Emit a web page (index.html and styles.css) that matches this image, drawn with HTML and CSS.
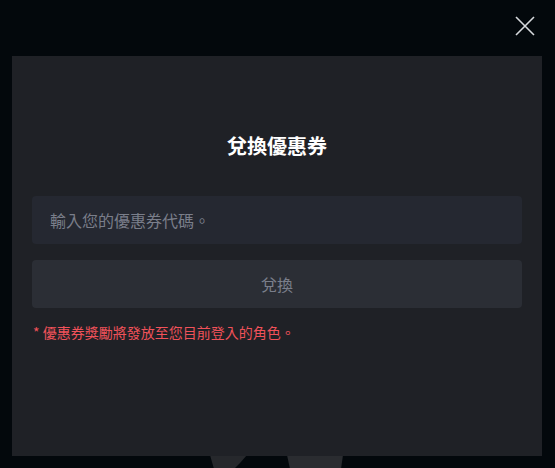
FILE: index.html
```html
<!DOCTYPE html>
<html lang="zh-Hant">
<head>
<meta charset="utf-8">
<title>兌換優惠券</title>
<link rel="stylesheet" href="styles.css">
</head>
<body>
<div class="backdrop">
  <svg class="bg-figure" width="140" height="14" viewBox="0 0 140 14">
    <path d="M0 0 H37 L30 8 L24 14 H4 Z" fill="#26282c"/>
    <path d="M77 0 H133 L131 14 H80 Z" fill="#2a2c30"/>
  </svg>
  <button class="close" aria-label="關閉">
    <svg width="20" height="20" viewBox="0 0 20 20"><path d="M1 1 L19 19 M19 1 L1 19" stroke="#d6d9dd" stroke-width="1.6" fill="none"/></svg>
  </button>
  <div class="modal">
    <h2 class="title">兌換優惠券</h2>
    <input class="code-input" type="text" placeholder="輸入您的優惠券代碼。">
    <button class="redeem">兌換</button>
    <p class="note">* 優惠券獎勵將發放至您目前登入的角色。</p>
  </div>
</div>
</body>
</html>
```

FILE: styles.css
```css
html, body {
  margin: 0;
  padding: 0;
  background: #03080c;
}
body {
  font-family: "Noto Sans CJK TC", "Noto Sans", sans-serif;
  width: 555px;
  height: 468px;
  overflow: hidden;
}
.backdrop {
  position: relative;
  width: 555px;
  height: 468px;
  padding-top: 56px;
  box-sizing: border-box;
}
.bg-figure {
  position: absolute;
  left: 210px;
  top: 455px;
}
.close {
  position: absolute;
  left: 515px;
  top: 16px;
  width: 20px;
  height: 20px;
  padding: 0;
  border: 0;
  background: none;
  display: block;
}
.close svg { display: block; }
.modal {
  position: relative;
  margin-left: 12px;
  width: 530px;
  height: 400px;
  background: #1f2126;
  box-sizing: border-box;
  padding: 76px 20px 0;
  display: flex;
  flex-direction: column;
}
.title {
  margin: 0;
  font-size: 20px;
  line-height: 28px;
  font-weight: 700;
  color: #ffffff;
  text-align: center;
}
.code-input {
  margin-top: 36px;
  height: 48px;
  border: 0;
  border-radius: 4px;
  background: #252831;
  padding: 0 18px;
  font-family: inherit;
  font-size: 16px;
  color: #c8ccd4;
  outline: none;
  box-sizing: border-box;
}
.code-input::placeholder { color: #7a7e8a; }
.redeem {
  margin-top: 16px;
  height: 48px;
  border: 0;
  border-radius: 4px;
  background: #2b2e35;
  color: #7a7e8a;
  font-family: inherit;
  font-size: 16px;
  padding: 0;
}
.note {
  margin: 14px 0 0 1px;
  font-size: 14px;
  line-height: 20px;
  color: #f0525a;
}
```
